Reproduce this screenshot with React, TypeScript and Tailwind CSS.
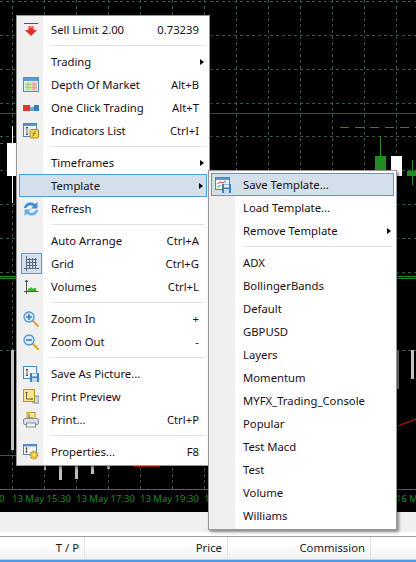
import type { ReactNode } from 'react'

const font = "font-['Noto_Sans',sans-serif]"

const SellIcon = () => (
  <svg width="16" height="16" viewBox="0 0 16 16">
    <path d="M1 1.500h14" stroke="#555" strokeWidth="1" />
    <path d="M5.500 4h5v4H14l-6 6-6-6h3.500z" fill="#e0301e" />
    <path d="M5.500 4h5v2h-5z" fill="#f0796a" />
  </svg>
)
const DepthIcon = () => (
  <svg width="16" height="16" viewBox="0 0 16 16">
    <rect x="0.500" y="0.500" width="15" height="14" fill="#eaf2fb" stroke="#4a8ccb" />
    <rect x="1" y="1" width="14" height="3" fill="#5b9ad8" />
    <rect x="2" y="5" width="6" height="8.500" fill="#c4eb98" />
    <rect x="8.500" y="5" width="5.500" height="8.500" fill="#f6bdae" />
    <path d="M2 7.500h12M2 10.500h12M5 5v8.500M11 5v8.500" stroke="#a5b0a5" strokeWidth="0.600" />
  </svg>
)
const OneClickIcon = () => (
  <svg width="16" height="16" viewBox="0 0 16 16">
    <rect x="0" y="5" width="7" height="6" fill="#e0392b" />
    <rect x="7" y="5" width="4" height="2" fill="#e3e6ea" />
    <rect x="7" y="7" width="4" height="4" fill="#7ea6cc" />
    <rect x="11" y="5" width="5" height="6" fill="#2f7fcb" />
  </svg>
)
const IndicatorsIcon = () => (
  <svg width="16" height="16" viewBox="0 0 16 16">
    <rect x="0.500" y="0.500" width="13" height="13" fill="#f4f8fc" stroke="#4a86c0" />
    <rect x="1" y="1" width="12" height="2" fill="#5b97d2" />
    <path d="M4 4v8M2.800 5.200 4 4l1.200 1.200M2.800 10.800 4 12l1.200-1.200" stroke="#333" fill="none" strokeWidth="0.800" />
    <rect x="7" y="6.500" width="8.500" height="8.500" rx="1" fill="#f3d558" stroke="#a98c22" />
    <path d="M12.500 8.500c-1.500-.5-1.500 1-1.700 2.500s-.3 2-1.600 2M9.800 10.500h2.600" stroke="#7d6412" fill="none" strokeWidth="0.800" />
  </svg>
)
const RefreshIcon = () => (
  <svg width="16" height="16" viewBox="0 0 16 16">
    <path d="M1 7C1.500 3 5 1 8.500 1.500c1.500.2 2.500.8 3.500 1.700L14.500 1v6.500H8l2.300-2.200C8 3.500 4.500 4 3.500 7z" fill="#3b8ed6" />
    <path d="M15 9c-.5 4-4 6-7.500 5.500-1.500-.2-2.500-.8-3.500-1.700L1.500 15V8.500H8L5.700 10.700C8 12.500 11.500 12 12.500 9z" fill="#6aaee6" />
  </svg>
)
const GridIcon = () => (
  <svg width="16" height="16" viewBox="0 0 16 16">
    <path d="M3.500 0v15M1 12.500h15M6.500 2v10M9.500 2v10M12.500 2v10M3.500 3.500H14M3.500 6.500H14M3.500 9.500H14" stroke="#5a6a78" strokeWidth="1" fill="none" />
  </svg>
)
const VolumesIcon = () => (
  <svg width="16" height="16" viewBox="0 0 16 16">
    <path d="M3.500 1v14M1 12.500h14.500M2 3l1.500-2L5 3" stroke="#4a545e" fill="none" />
    <path d="M5 12V9.500h2V8.500h2v1h2V9h2v3z" fill="#27c01f" />
  </svg>
)
const ZoomIcon = ({ plus }: { plus?: boolean }) => (
  <svg width="16" height="16" viewBox="0 0 16 16">
    <path d="M10 10l5 5" stroke="#d9ae3a" strokeWidth="2.400" strokeLinecap="round" />
    <circle cx="6" cy="6" r="5" fill="#d9ebfa" stroke="#4f96d2" strokeWidth="1.300" />
    <path d={plus ? 'M3 6h6M6 3v6' : 'M3 6h6'} stroke="#3a7db6" strokeWidth="1.600" />
  </svg>
)
const SavePictureIcon = () => (
  <svg width="16" height="16" viewBox="0 0 16 16">
    <rect x="0.500" y="0.500" width="13" height="12" fill="#f4f8fc" stroke="#4a86c0" />
    <path d="M4 3v7M2.800 4.200 4 3l1.200 1.200M2.800 8.800 4 10l1.200-1.200" stroke="#333" fill="none" strokeWidth="0.800" />
    <rect x="7" y="7" width="9" height="9" fill="#3f7fba" />
    <rect x="9" y="7.500" width="5" height="3" fill="#e8f0f8" />
    <rect x="9" y="12" width="5" height="4" fill="#c6d8ea" />
  </svg>
)
const PreviewIcon = () => (
  <svg width="16" height="16" viewBox="0 0 16 16">
    <rect x="10" y="7" width="6" height="7" fill="#d0d4d8" stroke="#8b9197" />
    <rect x="0.500" y="0.500" width="11" height="12" fill="#f6e487" stroke="#b5962a" />
    <path d="M3.500 3v7h6M2.500 4 3.500 3l1 1M8.500 9l1 1-1 1" stroke="#3d4650" fill="none" strokeWidth="0.800" />
  </svg>
)
const PrintIcon = () => (
  <svg width="16" height="16" viewBox="0 0 16 16">
    <rect x="4" y="0.500" width="8" height="7" fill="#f6e487" stroke="#b5962a" />
    <path d="M6 2v4h4" stroke="#3d4650" fill="none" strokeWidth="0.800" />
    <rect x="0.500" y="6.500" width="15" height="6" rx="1.500" fill="#dcdfe2" stroke="#878e95" />
    <rect x="3.500" y="11" width="9" height="4" fill="#f2f3f4" stroke="#878e95" />
  </svg>
)
const PropertiesIcon = () => (
  <svg width="16" height="16" viewBox="0 0 16 16">
    <rect x="0.500" y="0.500" width="13" height="10" fill="#f4f8fc" stroke="#4a86c0" />
    <rect x="1" y="1" width="12" height="1.500" fill="#5b97d2" />
    <path d="M3.500 3.500v5M2.500 4.500l1-1 1 1M2.500 7.500l1 1 1-1" stroke="#333" fill="none" strokeWidth="0.800" />
    <circle cx="11" cy="11" r="3.600" fill="#edc23c" stroke="#c79a22" strokeWidth="2" strokeDasharray="1.500 1" />
    <circle cx="11" cy="11" r="1.300" fill="#fff3b8" />
  </svg>
)
const SaveTemplateIcon = () => (
  <svg width="16" height="16" viewBox="0 0 16 16">
    <rect x="0.500" y="0.500" width="14" height="12" fill="#f4f8fc" stroke="#4a86c0" />
    <rect x="1" y="1" width="13" height="2" fill="#5b97d2" />
    <path d="M2.500 6.500 6 5l2 1 3-2" stroke="#d8392b" fill="none" />
    <path d="M2.500 10 5.500 8.500" stroke="#2c9a2c" fill="none" />
    <rect x="7" y="7" width="9" height="9" fill="#3f7fba" />
    <rect x="9" y="7.500" width="5" height="3" fill="#e8f0f8" />
    <rect x="9" y="12" width="5" height="4" fill="#c6d8ea" />
  </svg>
)

const Sep = () => (
  <div className="flex h-[9px] items-center pl-[32px] pr-[2px]">
    <div className="h-px w-full bg-[#e3e3e3]" />
  </div>
)

type RowProps = {
  label: string
  hint?: string
  icon?: ReactNode
  arrow?: boolean
  active?: boolean
  checked?: boolean
}

// gutter width comes from the first column, the rest of the row is label + shortcut
const Row = ({ label, hint, icon, arrow, active, checked }: RowProps) => (
  <div
    className={`relative flex h-[23px] items-center text-[11.300px] text-[#1a0f14] ${
      active ? 'border border-[#4a9bea] bg-[#d3e0ec]' : ''
    }`}
  >
    <div className={`flex w-[24px] shrink-0 items-center justify-center ${active ? '-ml-px' : ''}`}>
      {checked ? (
        <div className="flex size-[21px] shrink-0 items-center justify-center border border-[#4a9bea] bg-[#d3e0ec]">{icon}</div>
      ) : (
        icon
      )}
    </div>
    <span className="ml-[8px] flex-1 whitespace-nowrap pt-[2px]">{label}</span>
    {hint && <span className="whitespace-nowrap pt-[2px]">{hint}</span>}
    <div className="flex w-[8px] shrink-0 justify-end pr-[3px]">
      {arrow && <div className="h-0 w-0 shrink-0 border-y-[3.500px] border-l-[4px] border-y-transparent border-l-black" />}
    </div>
  </div>
)

const Chart = () => {
  const xs = [12, 44, 76, 108, 140, 172, 204, 236, 268, 300, 332, 364, 396]
  const ys = [1, 35, 69, 103, 136, 170, 204, 238, 272, 350]
  return (
    <svg width="416" height="511" className="block" shapeRendering="crispEdges">
      {xs.map((x) => (
        <path key={x} d={`M${x + 0.5} 0V489`} stroke="#2f5a50" strokeDasharray="3 3" />
      ))}
      {ys.map((y) => (
        <path key={y} d={`M0 ${y + 0.5}H416`} stroke="#2f5a50" strokeDasharray="3 3" />
      ))}
      <path d="M0 113.500H416" stroke="#3f4f4c" />
      <path d="M340 127.500H416" stroke="#228b22" strokeDasharray="9 6" />
      <path d="M0 276.500H17M0 278.500H17M397 276.500H416M397 278.500H416" stroke="#228b22" />
      <path d="M0 143.500H3" stroke="#228b22" />

      {/* candles */}
      <rect x="12" y="126" width="1" height="77" fill="#fff" />
      <rect x="7" y="143" width="10" height="33" fill="#fff" />
      <rect x="11" y="350" width="3" height="100" fill="#c0c0c0" />
      <rect x="380" y="136" width="1" height="35" fill="#228b22" />
      <rect x="375" y="156" width="11" height="14" fill="#228b22" />
      <rect x="391" y="156" width="11" height="20" fill="#fff" />
      <rect x="412" y="160" width="1" height="25" fill="#228b22" />
      <rect x="407" y="171" width="9" height="5" fill="#228b22" />
      <rect x="397" y="350" width="2" height="39" fill="#808080" />
      <rect x="411" y="350" width="3" height="29" fill="#c0c0c0" />
      <rect x="44" y="460" width="2" height="10" fill="#c0c0c0" />
      <rect x="59" y="460" width="3" height="20" fill="#c0c0c0" />
      <rect x="75" y="460" width="3" height="19" fill="#c0c0c0" />
      <rect x="91" y="460" width="3" height="14" fill="#c0c0c0" />
      <rect x="107" y="460" width="3" height="9" fill="#c0c0c0" />

      {/* red levels */}
      <path d="M0 455.500H17M133 466.500H160" stroke="#e01010" />
      <path d="M398 426L416 419" stroke="#ff0000" shapeRendering="auto" />

      {/* time axis */}
      <path d="M0 489.500H416" stroke="#228b22" />
    </svg>
  )
}

const labels: [string, string][] = [
  ['0', 'left-[-1px]'],
  ['13 May 15:30', 'left-[12px]'],
  ['13 May 17:30', 'left-[76px]'],
  ['13 May 19:30', 'left-[140px]'],
  ['1', 'left-[204px]'],
  ['16 M', 'left-[396px]'],
]

export default function App() {
  return (
    <div className={`relative flex h-[562px] w-[416px] flex-col overflow-hidden bg-white ${font}`}>
      {/* chart */}
      <div className="relative h-[511px] bg-black">
        <Chart />
        {labels.map(([t, pos]) => (
          <span key={t} className={`absolute top-[491px] whitespace-nowrap text-[9.500px] leading-4 text-[#228b22] ${pos}`}>
            {t}
          </span>
        ))}
      </div>
      <div className="h-px bg-black" />

      {/* toolbar strip + table header */}
      <div className="h-[20px] bg-[#f0f0f0]" />
      <div className="h-[4px] bg-white" />
      <div className="h-px bg-[#a0a0a0]" />
      <div className="grid h-[23px] grid-cols-[85px_143px_143px_1fr] bg-gradient-to-b from-white from-30% to-[#f2f2f2] text-[11.300px] text-[#1a1a1a]">
        <div className="flex items-center justify-end border-r border-[#e3e3e3] pr-[5px] pt-[2px]">T / P</div>
        <div className="flex items-center justify-end border-r border-[#e3e3e3] pr-[5px] pt-[2px]">Price</div>
        <div className="flex items-center justify-end border-r border-[#e3e3e3] pr-[5px] pt-[2px]">Commission</div>
        <div />
      </div>
      <div className="h-px bg-[#d0d0d0]" />
      <div className="h-[2px] bg-[#4a9bea]" />

      {/* context menu */}
      <div className="absolute left-[16px] top-[15px] h-[451px] w-[194px] border border-[#979797] bg-[linear-gradient(to_right,#f0f0f0_26px,#fff_26px)] p-[2px] shadow-[2px_2px_3px_rgba(0,0,0,0.45)]">
        <Row label="Sell Limit 2.00" hint="0.73239" icon={<SellIcon />} />
        <Sep />
        <Row label="Trading" arrow />
        <Row label="Depth Of Market" hint="Alt+B" icon={<DepthIcon />} />
        <Row label="One Click Trading" hint="Alt+T" icon={<OneClickIcon />} />
        <Row label="Indicators List" hint="Ctrl+I" icon={<IndicatorsIcon />} />
        <Sep />
        <Row label="Timeframes" arrow />
        <Row label="Template" arrow active />
        <Row label="Refresh" icon={<RefreshIcon />} />
        <Sep />
        <Row label="Auto Arrange" hint="Ctrl+A" />
        <Row label="Grid" hint="Ctrl+G" icon={<GridIcon />} checked />
        <Row label="Volumes" hint="Ctrl+L" icon={<VolumesIcon />} />
        <Sep />
        <Row label="Zoom In" hint="+" icon={<ZoomIcon plus />} />
        <Row label="Zoom Out" hint="-" icon={<ZoomIcon />} />
        <Sep />
        <Row label="Save As Picture..." icon={<SavePictureIcon />} />
        <Row label="Print Preview" icon={<PreviewIcon />} />
        <Row label="Print..." hint="Ctrl+P" icon={<PrintIcon />} />
        <Sep />
        <Row label="Properties..." hint="F8" icon={<PropertiesIcon />} />
      </div>

      {/* template submenu */}
      <div className="absolute left-[208px] top-[170px] h-[360px] w-[189px] border border-[#979797] bg-[linear-gradient(to_right,#f0f0f0_26px,#fff_26px)] p-[2px] shadow-[2px_2px_3px_rgba(0,0,0,0.45)]">
        <Row label="Save Template..." icon={<SaveTemplateIcon />} active />
        <Row label="Load Template..." />
        <Row label="Remove Template" arrow />
        <Sep />
        {['ADX', 'BollingerBands', 'Default', 'GBPUSD', 'Layers', 'Momentum', 'MYFX_Trading_Console', 'Popular', 'Test Macd', 'Test', 'Volume', 'Williams'].map((t) => (
          <Row key={t} label={t} />
        ))}
      </div>
    </div>
  )
}
